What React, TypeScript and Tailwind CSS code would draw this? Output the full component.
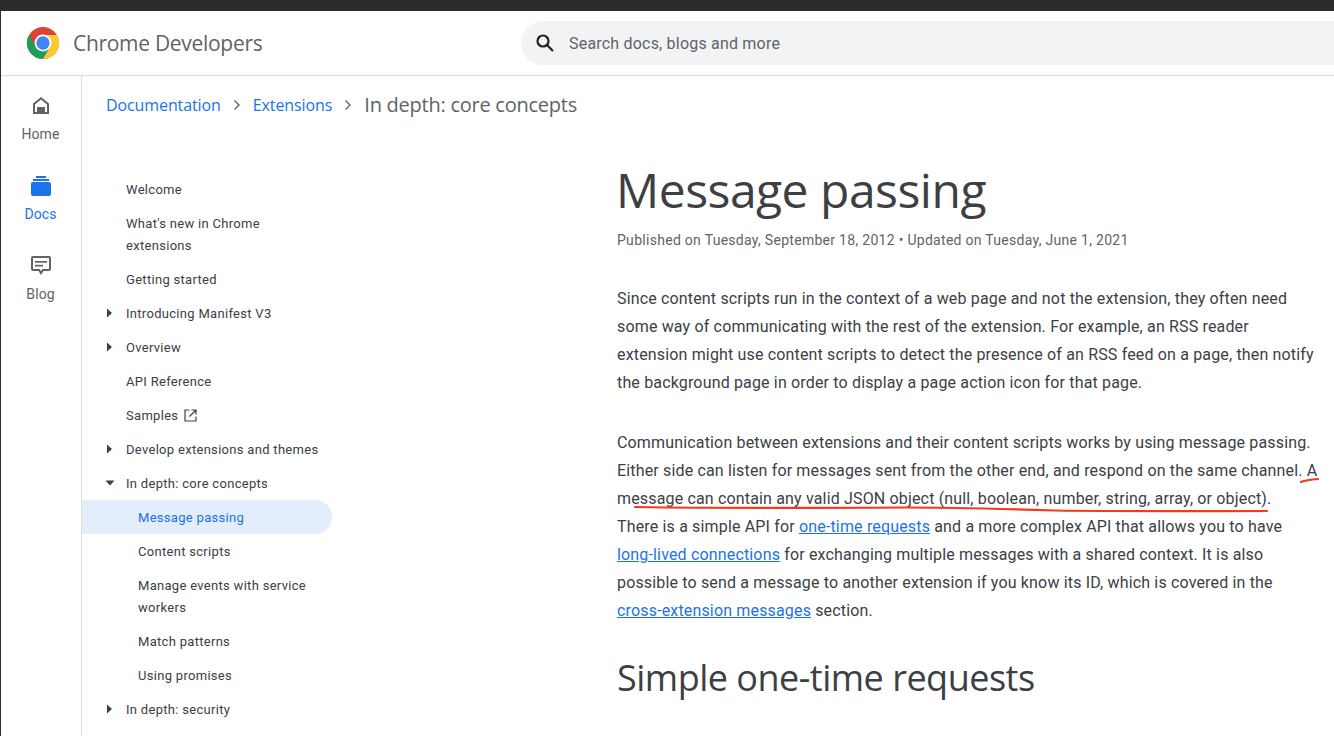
import React from 'react';

type NavItem = {
  label: string;
  caret?: 'right' | 'down';
  child?: boolean;
  active?: boolean;
  external?: boolean;
};

const NAV_ITEMS: NavItem[] = [
  { label: 'Welcome' },
  { label: "What's new in Chrome extensions" },
  { label: 'Getting started' },
  { label: 'Introducing Manifest V3', caret: 'right' },
  { label: 'Overview', caret: 'right' },
  { label: 'API Reference' },
  { label: 'Samples', external: true },
  { label: 'Develop extensions and themes', caret: 'right' },
  { label: 'In depth: core concepts', caret: 'down' },
  { label: 'Message passing', child: true, active: true },
  { label: 'Content scripts', child: true },
  { label: 'Manage events with service workers', child: true },
  { label: 'Match patterns', child: true },
  { label: 'Using promises', child: true },
  { label: 'In depth: security', caret: 'right' },
];

const ChromeLogo = () => (
  <svg width="32" height="32" viewBox="0 0 48 48">
    <circle cx="24" cy="24" r="24" fill="#db4437" />
    <path d="M3.200 12A24 24 0 0 0 24 48L34.400 30H13.600Z" fill="#1e9e56" />
    <path d="M44.800 12A24 24 0 0 1 24 48L34.400 30 24 12Z" fill="#fcc934" />
    <circle cx="24" cy="24" r="12.700" fill="#fff" />
    <circle cx="24" cy="24" r="10" fill="#4285f4" />
  </svg>
);

const HomeIcon = () => (
  <svg width="24" height="24" viewBox="0 0 24 24" fill="#5f6368">
    <path
      fillRule="evenodd"
      d="M12 3 4 9.500V20h16V9.500L12 3zM6 10.500l6-4.900 6 4.900V18h-2v-5H8v5H6v-7.500z"
    />
    <rect x="9" y="14" width="6" height="6" />
  </svg>
);

const DocsIcon = () => (
  <svg width="24" height="24" viewBox="0 0 24 24" fill="#1a73e8">
    <rect x="7" y="2" width="10" height="2" />
    <rect x="4" y="5" width="16" height="2" />
    <rect x="2" y="8" width="20" height="14" rx="2" />
  </svg>
);

const BlogIcon = () => (
  <svg width="24" height="24" viewBox="0 0 24 24" fill="#5f6368">
    <path
      fillRule="evenodd"
      d="M4 2h16a2 2 0 0 1 2 2v11a2 2 0 0 1-2 2h-5.500L12 21l-2.500-4H4a2 2 0 0 1-2-2V4a2 2 0 0 1 2-2zm0 2v11h6.600l1.400 2.200 1.400-2.200H20V4H4z"
    />
    <rect x="6" y="7" width="12" height="1.700" />
    <rect x="6" y="10.800" width="8" height="1.700" />
  </svg>
);

const Chevron = () => (
  <svg width="24" height="24" viewBox="0 0 24 24" fill="none" stroke="#5f6368" strokeWidth="1.400">
    <path d="M9.500 7.500 14 12l-4.500 4.500" />
  </svg>
);

const RailItem = ({ icon, label, active }: { icon: React.ReactNode; label: string; active?: boolean }) => (
  <div className={`flex h-[80px] flex-col items-center pt-[18px] ${active ? 'text-[#1a73e8]' : 'text-[#5f6368]'}`}>
    {icon}
    <span className="mt-[6px] text-[14px] leading-[20px] tracking-[0.1px]">{label}</span>
  </div>
);

const SideNavRow = ({ item }: { item: NavItem }) => (
  <div
    className={`relative w-[250px] rounded-r-[17px] pt-[7px] pb-[5px] pr-[6px] text-[13px] leading-[22px] tracking-[0.3px] ${
      item.child ? 'pl-[56px]' : 'pl-[44px]'
    } ${item.active ? 'bg-[#e3edfb] text-[#1a73e8]' : 'text-[#3c4043]'}`}
  >
    {item.caret === 'right' && (
      <svg className="absolute left-[24px] top-[12px]" width="8" height="10" viewBox="0 0 8 10" fill="#3c4043">
        <path d="M1 0.500v9L6 5z" />
      </svg>
    )}
    {item.caret === 'down' && (
      <svg className="absolute left-[23px] top-[13px]" width="10" height="8" viewBox="0 0 10 8" fill="#3c4043">
        <path d="M0.500 1.500h9L5 6.500z" />
      </svg>
    )}
    {item.label}
    {item.external && (
      <svg className="ml-[6px] inline-block align-[-2px]" width="13" height="13" viewBox="0 0 13 13" fill="none" stroke="#3c4043" strokeWidth="1.200">
        <path d="M5.500 1H1v11h11V7.500M7.500 1H12v4.500M12 1 5.500 7.500" />
      </svg>
    )}
  </div>
);

const Link = ({ children }: { children: React.ReactNode }) => (
  <a className="text-[#1a73e8] underline">{children}</a>
);

export default function App() {
  return (
    <div className="relative flex h-[736px] w-[1334px] flex-col overflow-hidden bg-white font-['Roboto',sans-serif]">
      {/* browser chrome strip */}
      <div className="h-[11px] shrink-0 bg-[#2c2b30]" />
      <div className="absolute left-0 top-0 h-full w-px bg-[#2c2b30]" />

      <header className="flex h-[65px] shrink-0 items-center border-b border-[#dadce0] pl-[27px]">
        <ChromeLogo />
        <span className="ml-[14px] w-[448px] pt-[2px] font-['Open_Sans',sans-serif] text-[21px] tracking-[-0.3px] text-[#5f6368]">
          Chrome Developers
        </span>
        <div className="flex h-[44px] flex-1 items-center rounded-l-[22px] bg-[#f1f3f4] pl-[12px]">
          <svg width="24" height="24" viewBox="0 0 24 24" fill="none" stroke="#202124" strokeWidth="2.200">
            <circle cx="10" cy="10" r="5.500" />
            <path d="m14 14 6 6" />
          </svg>
          <span className="ml-[12px] pt-[2px] text-[16px] tracking-[0.2px] text-[#5f6368]">Search docs, blogs and more</span>
        </div>
      </header>

      <div className="flex min-h-0 flex-1">
        <nav className="w-[82px] shrink-0 border-r border-[#dadce0]">
          <RailItem icon={<HomeIcon />} label="Home" />
          <RailItem icon={<DocsIcon />} label="Docs" active />
          <RailItem icon={<BlogIcon />} label="Blog" />
        </nav>

        <div className="flex-1">
          <div className="flex h-[58px] items-center pl-[24px] font-['Open_Sans',sans-serif]">
            <span className="text-[16px] tracking-[-0.1px] text-[#1a73e8]">Documentation</span>
            <span className="w-[32px] pl-[4px]"><Chevron /></span>
            <span className="text-[16px] tracking-[-0.1px] text-[#1a73e8]">Extensions</span>
            <span className="w-[32px] pl-[4px]"><Chevron /></span>
            <span className="text-[20px] tracking-[-0.25px] text-[#5f6368]">In depth: core concepts</span>
          </div>

          <div className="flex">
            <aside className="w-[535px] shrink-0 pt-[38px]">
              {NAV_ITEMS.map(item => (
                <SideNavRow key={item.label} item={item} />
              ))}
            </aside>

            <main className="w-[702px] shrink-0 text-[16px] leading-[28px] tracking-[0.16px] text-[#3c4043]">
              <h1 className="mt-[23px] -ml-px font-['Open_Sans',sans-serif] text-[48px] leading-[66px] tracking-[-0.5px] text-[#3c4043]">
                Message passing
              </h1>
              <p className="mt-[6px] text-[14px] leading-[22px] tracking-[0.29px] text-[#5f6368]">
                Published on Tuesday, September 18, 2012 • Updated on Tuesday, June 1, 2021
              </p>
              <p className="mt-[34px]">
                Since content scripts run in the context of a web page and not the extension, they often need some way of communicating with the rest of the extension. For example, an RSS reader extension might use content scripts to detect the presence of an RSS feed on a page, then notify the background page in order to display a page action icon for that page.
              </p>
              <p className="mt-[32px]">
                Communication between extensions and their content scripts works by using message passing. Either side can listen for messages sent from the other end, and respond on the same channel. A message can contain any valid JSON object (null, boolean, number, string, array, or object).<br />There is a simple API for <Link>one-time requests</Link> and a more complex API that allows you to have <Link>long-lived connections</Link> for exchanging multiple messages with a shared context. It is also possible to send a message to another extension if you know its ID, which is covered in the <Link>cross-extension messages</Link> section.
              </p>
              <h2 className="mt-[30px] font-['Open_Sans',sans-serif] text-[36px] leading-[46px] tracking-[-0.5px] text-[#3c4043]">
                Simple one-time requests
              </h2>
            </main>
          </div>
        </div>
      </div>

      {/* hand-drawn red annotation */}
      <svg className="pointer-events-none absolute left-0 top-0" width="1334" height="736" fill="none" stroke="#f5391c" strokeWidth="2.200" strokeLinecap="round">
        <path d="M1301 482c5-2 11-2.500 17-3" />
        <path d="M635 507c100 1.500 200 1 270 0.500 50 0 100 1.500 150 3 70 1 140 0.500 212 0.500" />
      </svg>
    </div>
  );
}
